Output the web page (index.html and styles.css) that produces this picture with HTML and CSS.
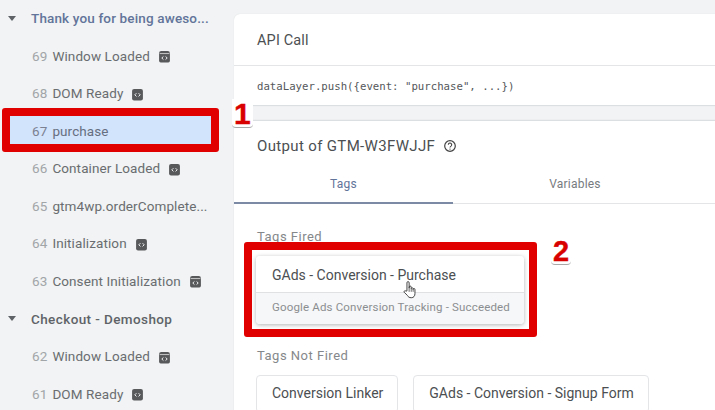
FILE: index.html
```html
<!DOCTYPE html>
<html lang="en">
<head>
<meta charset="utf-8">
<title>Tag Assistant</title>
<link rel="stylesheet" href="styles.css">
</head>
<body>
<div class="page">
  <aside class="sidebar">
    <div class="group group-active"><span class="caret"></span><span class="group-name">Thank you for being aweso...</span></div>
    <div class="row"><span class="num">69</span><span class="name">Window Loaded</span><svg class="ico" viewBox="0 0 12 12"><use href="#w"/></svg></div>
    <div class="row"><span class="num">68</span><span class="name">DOM Ready</span><svg class="ico" viewBox="0 0 12 12"><use href="#d"/></svg></div>
    <div class="row row-selected"><span class="num">67</span><span class="name">purchase</span></div>
    <div class="row"><span class="num">66</span><span class="name">Container Loaded</span><svg class="ico" viewBox="0 0 12 12"><use href="#d"/></svg></div>
    <div class="row"><span class="num">65</span><span class="name">gtm4wp.orderComplete...</span></div>
    <div class="row"><span class="num">64</span><span class="name">Initialization</span><svg class="ico" viewBox="0 0 12 12"><use href="#d"/></svg></div>
    <div class="row"><span class="num">63</span><span class="name">Consent Initialization</span><svg class="ico" viewBox="0 0 12 12"><use href="#w"/></svg></div>
    <div class="group"><span class="caret"></span><span class="group-name">Checkout - Demoshop</span></div>
    <div class="row"><span class="num">62</span><span class="name">Window Loaded</span><svg class="ico" viewBox="0 0 12 12"><use href="#w"/></svg></div>
    <div class="row"><span class="num">61</span><span class="name">DOM Ready</span><svg class="ico" viewBox="0 0 12 12"><use href="#d"/></svg></div>
  </aside>
  <main class="main">
    <section class="card api">
      <h2 class="api-title">API Call</h2>
      <div class="api-code">dataLayer.push({event: "purchase", ...})</div>
    </section>
    <section class="card output">
      <h2 class="out-title">Output of GTM-W3FWJJF
        <svg class="help" viewBox="0 0 14 14"><circle cx="7" cy="7" r="5.3" fill="none" stroke="#444" stroke-width="1.2"/><path d="M5.3 5.7a1.7 1.7 0 1 1 2.7 1.4c-.6.4-1 .7-1 1.5" fill="none" stroke="#444" stroke-width="1.1"/><circle cx="7" cy="10.1" r=".7" fill="#444"/></svg>
      </h2>
      <div class="tabs">
        <div class="tab tab-active">Tags</div>
        <div class="tab tab-second">Variables</div>
      </div>
      <div class="tag-body">
        <h3 class="label">Tags Fired</h3>
        <div class="fired">
          <div class="fired-name">GAds - Conversion - Purchase</div>
          <div class="fired-status">Google Ads Conversion Tracking - Succeeded</div>
        </div>
        <h3 class="label label-notfired">Tags Not Fired</h3>
        <div class="chips">
          <div class="chip">Conversion Linker</div>
          <div class="chip">GAds - Conversion - Signup Form</div>
        </div>
      </div>
    </section>
  </main>
  <div class="mark mark-one"></div>
  <div class="mark mark-two"></div>
  <span class="badge badge-one">1</span>
  <span class="badge badge-two">2</span>
  <svg class="cursor" viewBox="0 0 14 22"><path d="M4.2 12V3a1.2 1.2 0 0 1 2.4 0v6l.1-1.2a1.1 1.1 0 0 1 2.2 0V9.400a1.100 1.100 0 0 1 2.100-.1v1a1 1 0 0 1 2 .2v4.500c0 2.500-1.400 4.500-4 4.500-2.300 0-3.300-.8-4.300-2.500L1.200 13.500c-.7-1.300.9-2.400 1.900-1.200z" fill="#fff" stroke="#333" stroke-width="1"/><path d="M6.600 9v4M8.900 9.400v3.600M11 10v3" stroke="#333" stroke-width=".8"/></svg>
</div>
<svg class="defs" width="0" height="0">
  <defs>
    <g id="w"><path d="M1 3a2 2 0 0 1 2-2h6a2 2 0 0 1 2 2v7a1.500 1.500 0 0 1-1.500 1.500h-7A1.500 1.500 0 0 1 1 10z" fill="#58595b"/><path d="M1.500 3.300h9" stroke="#e8e8e8" stroke-width=".7"/><path d="M5 6l-1.500 1.400L5 8.800M7 6l1.500 1.400L7 8.800" fill="none" stroke="#f1f3f4" stroke-width=".9"/></g>
    <g id="d"><rect x="1" y="1" width="10" height="10.500" rx="1.800" fill="#58595b"/><path d="M5 4.800L3.500 6.300 5 7.800M7 4.800l1.500 1.500L7 7.800" fill="none" stroke="#f1f3f4" stroke-width=".9"/></g>
  </defs>
</svg>
</body>
</html>
```
FILE: styles.css
```css
* { box-sizing: border-box; }
html, body { margin: 0; padding: 0; }
body { width: 715px; height: 410px; overflow: hidden; background: #f1f3f4; font-family: "Roboto", "Liberation Sans", sans-serif; }
.page { position: relative; display: flex; width: 715px; height: 410px; overflow: hidden; }
.defs { position: absolute; }

.sidebar { flex: 0 0 234px; min-width: 0; padding-left: 9px; padding-right: 21px; margin-top: -1px; }
.group { display: flex; align-items: center; height: 38px; margin-left: -9px; color: #5f6368; font-size: 13.500px; font-weight: 500; letter-spacing: .4px; white-space: nowrap; }
.group-active { color: #62749a; letter-spacing: .15px; }
.caret { width: 0; height: 0; margin-left: 8px; margin-right: 15px; border-left: 4.500px solid transparent; border-right: 4.500px solid transparent; border-top: 5px solid #5f6368; }
.row { display: flex; align-items: center; height: 37.500px; padding-left: 23px; color: #6a6d70; font-size: 13.500px; letter-spacing: .1px; white-space: nowrap; }
.num { color: #a2a5a8; margin-right: 5px; }
.ico { width: 13px; height: 13px; margin-left: 8px; margin-top: 2px; }
.row-selected { background: #d2e3fc; color: #666f80; }
.row-selected .num { color: #7b8190; }

.main { flex: 1; padding-top: 14px; min-width: 0; display: flex; flex-direction: column; gap: 14px; }
.card { background: #fff; border-radius: 6px 0 0 6px; box-shadow: 0 0 1px #d5d7da; }
.api { height: 92px; border-bottom: 1px solid #dcdfe2; }
.api-title { height: 52px; margin: 0; padding: 18px 0 0 23px; font-size: 14.500px; font-weight: 400; color: #4c4f52; border-bottom: 1px solid #e3e5e7; letter-spacing: .15px; }
.api-code { padding: 14px 0 0 23px; font-family: "DejaVu Sans Mono", "Liberation Mono", monospace; font-size: 10.700px; color: #55585b; white-space: nowrap; }
.output { flex: 1; border-top: 1px solid #dcdfe2; border-radius: 0; min-height: 0; }
.out-title { display: flex; align-items: center; gap: 8px; height: 49px; margin: 0; padding: 0 0 0 23px; font-size: 15px; font-weight: 400; color: #4c4f52; letter-spacing: .35px; }
.help { width: 14px; height: 14px; }
.tabs { display: flex; height: 34px; border-bottom: 1px solid #e3e5e7; }
.tab { width: 219px; padding-top: 7px; text-align: center; font-size: 12px; color: #777b80; letter-spacing: .2px; }
.tab-second { width: 244px; }
.tab-active { color: #62749a; border-bottom: 2px solid #7d8aa6; height: 34px; }
.tag-body { padding: 25px 0 0 22px; }
.label { margin: 0; padding-left: 1px; font-size: 13px; font-weight: 400; color: #85888b; letter-spacing: .5px; line-height: 16px; }
.fired { width: 268px; margin-top: 11px; border-radius: 4px; box-shadow: 0 1px 4px rgba(60,64,67,.4); overflow: hidden; }
.fired-name { height: 37px; padding: 11px 0 0 16px; font-size: 14px; color: #4c4f52; background: #fff; border-bottom: 1px solid #dfe1e3; }
.fired-status { height: 31px; padding: 7px 0 0 16px; font-size: 11.500px; color: #8b8e91; background: #f6f7f8; letter-spacing: .16px; }
.label-notfired { margin-top: 24px; }
.chips { display: flex; gap: 15px; margin-top: 11px; }
.chip { height: 38px; padding: 9px 14px 0 15px; border: 1px solid #e3e5e7; border-radius: 4px; font-size: 14px; color: #4c4f52; white-space: nowrap; }

.mark { position: absolute; border: 8px solid #e00000; border-radius: 3px; }
.mark-one { left: 2px; top: 108px; width: 217px; height: 44px; }
.mark-two { left: 244px; top: 242px; width: 293px; height: 95px; }
.badge { position: absolute; padding: 0 2px 1px; font-family: "Liberation Sans", sans-serif; font-weight: 700; color: #d90000; line-height: 1; background: #fff; border-bottom: 1px solid #a8a8a8; border-radius: 0 0 4px 4px; -webkit-text-stroke: .4px #d90000; }
.badge-one { left: 232px; top: 99px; font-size: 30px; height: 29px; }
.badge-two { left: 551px; top: 237px; font-size: 29px; height: 28px; }
.cursor { position: absolute; left: 403px; top: 280px; width: 13px; height: 20px; }
```
